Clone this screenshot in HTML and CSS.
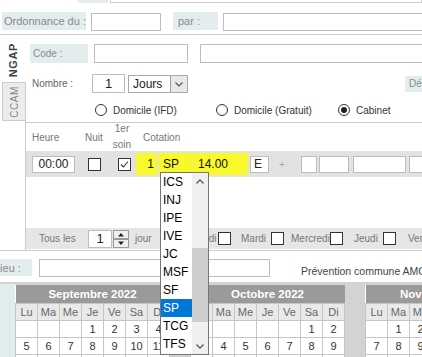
FILE: index.html
```html
<!DOCTYPE html>
<html lang="fr">
<head>
    <meta charset="UTF-8">
    <meta name="viewport" content="width=device-width, initial-scale=1.0">
    <title>Saisie des soins</title>
    <link rel="stylesheet" href="styles.css">
</head>
<body>
<div class="screen">
    <div class="top-strip"><span class="strip-label"></span><span class="strip-field"></span></div>

    <div class="ord-row">
        <label class="field-label ord-label">Ordonnance du :</label>
        <input class="field ord-date" type="text">
        <label class="field-label par-label">par :</label>
        <input class="field par-field" type="text">
    </div>

    <div class="acte-box">
        <div class="tabs">
            <div class="tab tab-active"><span>NGAP</span></div>
            <div class="tab tab-ccam"><span>CCAM</span></div>
        </div>
        <div class="panel">
            <div class="code-row">
                <label class="field-label code-label">Code :</label>
                <input class="field code-field" type="text">
                <input class="field libelle-field" type="text">
            </div>

            <div class="nombre-row">
                <span class="nombre-label">Nombre :</span>
                <input class="field nombre-field" type="text" value="1">
                <div class="select">
                    <span class="select-value">Jours</span>
                    <span class="select-arrow">
                        <svg width="16" height="16" viewBox="0 0 16 16"><path d="M4.5 6.5 L8 10 L11.5 6.5" fill="none" stroke="#555" stroke-width="1.2"/></svg>
                    </span>
                </div>
                <label class="field-label debut-label">Début :</label>
            </div>

            <div class="radio-row">
                <span class="radio-opt opt-ifd"><span class="radio"></span>Domicile (IFD)</span>
                <span class="radio-opt opt-gratuit"><span class="radio"></span>Domicile (Gratuit)</span>
                <span class="radio-opt"><span class="radio radio-on"></span>Cabinet</span>
            </div>

            <div class="cot-head">
                <span class="h-heure">Heure</span>
                <span class="h-nuit">Nuit</span>
                <span class="h-soin">1er<br>soin</span>
                <span class="h-cot">Cotation</span>
            </div>

            <div class="cot-band">
                <input class="field heure-field" type="text" value="00:00">
                <span class="check cb-nuit"></span>
                <span class="check cb-soin">
                    <svg width="11" height="11" viewBox="0 0 11 11"><path d="M2 5.5 L4.5 8 L9 2.5" fill="none" stroke="#333" stroke-width="1.1"/></svg>
                </span>
                <input class="field hl hl-coef" type="text" value="1">
                <input class="field hl hl-code" type="text" value="SP">
                <input class="field hl hl-montant" type="text" value="14.00">
                <input class="field e-field" type="text" value="E">
                <span class="plus">+</span>
                <input class="field x1" type="text">
                <input class="field x2" type="text">
                <input class="field x3" type="text">
                <input class="field x4" type="text">
            </div>

            <div class="tous-band">
                <span class="tous-label">Tous les</span>
                <input class="field tous-field" type="text" value="1">
                <span class="spinner">
                    <span class="spin-btn"><svg width="8" height="5" viewBox="0 0 8 5"><path d="M1 4.5 L4 1 L7 4.5 Z" fill="#222"/></svg></span>
                    <span class="spin-btn"><svg width="8" height="5" viewBox="0 0 8 5"><path d="M1 0.5 L4 4 L7 0.5 Z" fill="#222"/></svg></span>
                </span>
                <span class="jour-label">jour</span>
                <span class="day-label lundi">Lundi</span><span class="check"></span>
                <span class="day-label mardi">Mardi</span><span class="check"></span>
                <span class="day-label mercredi">Mercredi</span><span class="check"></span>
                <span class="day-label jeudi">Jeudi</span><span class="check"></span>
                <span class="day-label vendredi">Vendredi</span>
            </div>
        </div>
    </div>

    <div class="lieu-row">
        <label class="field-label lieu-label">Lieu :</label>
        <input class="field lieu-field" type="text">
        <span class="prevention">Prévention commune AMC</span>
    </div>

    <div class="calendars">
        <div class="cal-strip"></div>
        <div class="cal-group">
            <table class="cal">
                <tr><th class="cal-title" colspan="7">Septembre 2022</th></tr>
                <tr class="days"><td>Lu</td><td>Ma</td><td>Me</td><td>Je</td><td>Ve</td><td>Sa</td><td>Di</td></tr>
                <tr><td></td><td></td><td></td><td>1</td><td>2</td><td>3</td><td>4</td></tr>
                <tr><td>5</td><td>6</td><td>7</td><td>8</td><td>9</td><td>10</td><td>11</td></tr>
                <tr><td>12</td><td>13</td><td>14</td><td>15</td><td>16</td><td>17</td><td>18</td></tr>
            </table>
            <table class="cal">
                <tr><th class="cal-title" colspan="7">Octobre 2022</th></tr>
                <tr class="days"><td>Lu</td><td>Ma</td><td>Me</td><td>Je</td><td>Ve</td><td>Sa</td><td>Di</td></tr>
                <tr><td></td><td></td><td></td><td></td><td></td><td>1</td><td>2</td></tr>
                <tr><td>3</td><td>4</td><td>5</td><td>6</td><td>7</td><td>8</td><td>9</td></tr>
                <tr><td>10</td><td>11</td><td>12</td><td>13</td><td>14</td><td>15</td><td>16</td></tr>
            </table>
            <table class="cal">
                <tr><th class="cal-title" colspan="7">Novembre 2022</th></tr>
                <tr class="days"><td>Lu</td><td>Ma</td><td>Me</td><td>Je</td><td>Ve</td><td>Sa</td><td>Di</td></tr>
                <tr><td></td><td>1</td><td>2</td><td>3</td><td>4</td><td>5</td><td>6</td></tr>
                <tr><td>7</td><td>8</td><td>9</td><td>10</td><td>11</td><td>12</td><td>13</td></tr>
                <tr><td>14</td><td>15</td><td>16</td><td>17</td><td>18</td><td>19</td><td>20</td></tr>
            </table>
        </div>
    </div>

    <!-- liste ouverte du code de cotation -->
    <div class="code-list">
        <ul class="code-items">
            <li>ICS</li>
            <li>INJ</li>
            <li>IPE</li>
            <li>IVE</li>
            <li>JC</li>
            <li>MSF</li>
            <li>SF</li>
            <li class="selected">SP</li>
            <li>TCG</li>
            <li>TFS</li>
        </ul>
        <div class="scrollbar">
            <span class="scroll-btn"><svg width="16" height="16" viewBox="0 0 16 16"><path d="M4.5 9.5 L8 6 L11.5 9.5" fill="none" stroke="#606060" stroke-width="1.4"/></svg></span>
            <span class="scroll-thumb"></span>
            <span class="scroll-btn scroll-down"><svg width="16" height="16" viewBox="0 0 16 16"><path d="M4.5 6.5 L8 10 L11.5 6.5" fill="none" stroke="#606060" stroke-width="1.4"/></svg></span>
        </div>
    </div>
</div>
</body>
</html>
```

FILE: styles.css
```css
* {
    box-sizing: border-box;
}

html, body {
    margin: 0;
    overflow: hidden;
}

body {
    font-family: 'Liberation Sans', Arial, sans-serif;
    font-size: 10px;
    color: #666;
    background: #fff;
}

.screen {
    position: relative;
    width: 422px;
    height: 357px;
    overflow: hidden;
}

/* champs */
.field {
    margin: 0;
    padding: 0 3px;
    border: 1px solid #bdbdbd;
    background: #fff;
    font-family: 'Liberation Sans', Arial, sans-serif;
    font-size: 12px;
    color: #222;
    outline: none;
    flex: none;
}

.field-label {
    display: flex;
    align-items: center;
    background: #e3eded;
    color: #8a8a8a;
    flex: none;
}

.check {
    display: flex;
    align-items: center;
    justify-content: center;
    width: 13px;
    height: 13px;
    border: 1px solid #333;
    background: #fff;
    flex: none;
}

/* bande du haut */
.top-strip {
    display: flex;
    height: 3px;
}

.strip-label {
    margin-left: 78px;
    width: 30px;
    background: #e3eded;
}

.strip-field {
    margin-left: 2px;
    flex: 1;
    border: 1px solid #ccc;
    border-top: none;
}

.ord-row {
    display: flex;
    align-items: flex-start;
    margin-top: 9px;
    height: 19px;
}

.ord-label {
    margin-left: 2px;
    width: 84px;
    height: 18px;
    padding-left: 2px;
    font-size: 11px;
}

.ord-date {
    margin-left: 5px;
    margin-top: 1px;
    width: 70px;
    height: 18px;
}

.par-label {
    margin-left: 12px;
    width: 45px;
    height: 18px;
    padding-left: 5px;
    font-size: 11px;
}

.par-field {
    margin-left: 5px;
    margin-top: 1px;
    width: 210px;
    height: 18px;
}

/* onglets NGAP / CCAM */
.acte-box {
    display: flex;
    margin-top: 3px;
    height: 217px;
    border-top: 1px solid #ccc;
    border-bottom: 1px solid #ccc;
}

.tabs {
    position: relative;
    z-index: 1;
    width: 25px;
    flex: none;
}

.tab {
    display: flex;
    align-items: center;
    justify-content: center;
}

.tab span {
    writing-mode: vertical-rl;
    transform: rotate(180deg);
    letter-spacing: 0.6px;
}

.tab-active {
    width: 26px;
    height: 47px;
    background: #fff;
    padding-top: 3px;
}

.tab-active span {
    font-size: 11px;
    font-weight: bold;
    color: #444;
}

.tab-ccam {
    margin-left: 2px;
    width: 23px;
    height: 39px;
    background: #ececec;
    border: 1px solid #ccc;
    border-right: none;
}

.tab-ccam span {
    color: #888;
}

.panel {
    flex: 1;
    display: flex;
    flex-direction: column;
    border-left: 1px solid #ccc;
}

.code-row {
    display: flex;
    align-items: center;
    margin-top: 8px;
    height: 20px;
}

.code-label {
    margin-left: 4px;
    width: 58px;
    height: 19px;
    padding-left: 3px;
}

.code-field {
    margin-left: 6px;
    width: 94px;
    height: 19px;
}

.libelle-field {
    margin-left: 12px;
    width: 240px;
    height: 19px;
}

.nombre-row {
    display: flex;
    align-items: center;
    margin-top: 11px;
    height: 19px;
}

.nombre-label {
    margin-left: 6px;
    width: 60px;
    flex: none;
}

.nombre-field {
    width: 33px;
    height: 19px;
    text-align: center;
    font-size: 13px;
}

.select {
    display: flex;
    margin-left: 3px;
    width: 60px;
    height: 18px;
    border: 1px solid #aaa;
    background: #fff;
    flex: none;
}

.select-value {
    flex: 1;
    padding-left: 4px;
    font-size: 12px;
    line-height: 16px;
    color: #222;
}

.select-arrow {
    display: flex;
    align-items: center;
    justify-content: center;
    width: 17px;
    background: #e8e8e8;
    border-left: 1px solid #a0a0a0;
}

.debut-label {
    margin-left: 217px;
    width: 50px;
    height: 16px;
    padding-left: 4px;
}

.radio-row {
    display: flex;
    align-items: center;
    margin-top: 10px;
    height: 14px;
    color: #333;
}

.radio-opt {
    display: flex;
    align-items: center;
    gap: 6px;
    flex: none;
}

.opt-ifd {
    margin-left: 69px;
    width: 121px;
}

.opt-gratuit {
    width: 122px;
}

.radio {
    display: flex;
    align-items: center;
    justify-content: center;
    width: 12px;
    height: 12px;
    border: 1px solid #333;
    border-radius: 50%;
    background: #fff;
}

.radio-on::after {
    content: '';
    width: 6px;
    height: 6px;
    border-radius: 50%;
    background: #222;
}

.cot-head {
    display: flex;
    align-items: center;
    margin-top: 5px;
    height: 29px;
    border-top: 1px solid #ccc;
    color: #777;
}

.h-heure {
    margin-left: 6px;
    width: 53px;
}

.h-nuit {
    width: 27px;
}

.h-soin {
    width: 20px;
    line-height: 16px;
    text-align: center;
}

.h-cot {
    margin-left: 11px;
}

.cot-band {
    display: flex;
    align-items: center;
    height: 26px;
    background: #e2e2e2;
}

.cot-band .field {
    height: 17px;
}

.heure-field {
    margin-left: 6px;
    width: 43px;
    text-align: center;
}

.cb-nuit {
    margin-left: 13px;
}

.cb-soin {
    margin-left: 17px;
}

.cot-band .hl {
    height: 20px;
    border: none;
    background: #f8f82a;
    box-shadow: 0 0 2px 1px #f8f82a;
    color: #111;
}

.hl-coef {
    margin-left: 6px;
    width: 19px;
    padding: 0 2px 0 0;
    text-align: right;
}

.hl-code {
    margin-left: 4px;
    width: 31px;
}

.hl-montant {
    margin-left: 2px;
    width: 54px;
    padding-left: 5px;
}

.e-field {
    margin-left: 3px;
    width: 19px;
}

.plus {
    width: 26px;
    text-align: center;
    color: #aaa;
    font-size: 10px;
}

.x1 {
    margin-left: 6px;
    width: 16px;
}

.x2 {
    margin-left: 2px;
    width: 30px;
}

.x3 {
    margin-left: 4px;
    width: 53px;
}

.x4 {
    margin-left: 3px;
    width: 30px;
}

.tous-band {
    display: flex;
    align-items: center;
    margin-top: auto;
    margin-bottom: 1px;
    height: 21px;
    background: #e6e6e6;
    color: #777;
}

.tous-label {
    margin-left: 13px;
    width: 49px;
    flex: none;
}

.tous-field {
    width: 24px;
    height: 18px;
    text-align: center;
    font-size: 13px;
}

.spinner {
    display: flex;
    flex-direction: column;
    margin-left: 1px;
    width: 16px;
    height: 18px;
    flex: none;
}

.spin-btn {
    display: flex;
    align-items: center;
    justify-content: center;
    height: 9px;
    border: 1px solid #999;
    background: #f0f0f0;
}

.jour-label {
    margin-left: 6px;
    width: 57px;
    flex: none;
}

.day-label {
    flex: none;
    white-space: nowrap;
}

.lundi {
    width: 26px;
}

.mardi {
    margin-left: 10px;
    width: 30px;
}

.mercredi {
    margin-left: 7px;
    width: 39px;
}

.jeudi {
    margin-left: 11px;
    width: 29px;
}

.vendredi {
    margin-left: 12px;
}

/* lieu */
.lieu-row {
    display: flex;
    align-items: center;
    margin-top: 7px;
    height: 19px;
}

.lieu-label {
    margin-left: -7px;
    width: 39px;
    height: 17px;
    padding-left: 1px;
    font-size: 11px;
}

.lieu-field {
    margin-left: 7px;
    width: 231px;
    height: 18px;
}

.prevention {
    margin-left: 31px;
    color: #444;
    font-size: 10.5px;
    white-space: nowrap;
    padding-top: 7px;
}

/* calendriers */
.calendars {
    display: flex;
    margin-top: 5px;
    height: 80px;
    border-top: 2px solid #d3d3d3;
}

.cal-strip {
    width: 15px;
    flex: none;
    background: #e1ecec;
}

.cal-group {
    display: flex;
    gap: 20px;
    flex: 1;
    padding-top: 1px;
    background: #d3d3d3;
}

.cal {
    flex: none;
    width: 155px;
    border-collapse: collapse;
    table-layout: fixed;
    background: #fff;
    align-self: flex-start;
}

.cal-title {
    height: 18px;
    padding: 0;
    background: #9a9a9a;
    color: #fff;
    font-size: 11.5px;
    font-weight: bold;
}

.cal td {
    height: 17px;
    padding: 0;
    border: 1px solid #c6c6c6;
    text-align: center;
    font-size: 11px;
    color: #333;
}

.cal .days td {
    background: #e9e9e9;
    color: #666;
}

/* liste deroulante */
.code-list {
    position: absolute;
    left: 160px;
    top: 172px;
    z-index: 5;
    display: flex;
    width: 49px;
    height: 183px;
    border: 1px solid #767676;
    background: #fff;
}

.code-items {
    margin: 0;
    padding: 0;
    list-style: none;
    width: 31px;
}

.code-items li {
    height: 18px;
    line-height: 18px;
    padding-left: 2px;
    font-size: 12px;
    color: #000;
}

.code-items li.selected {
    background: #0078d7;
    color: #fff;
}

.scrollbar {
    display: flex;
    flex-direction: column;
    width: 16px;
    background: #f0f0f0;
}

.scroll-btn {
    display: flex;
    align-items: center;
    justify-content: center;
    height: 17px;
    flex: none;
}

.scroll-thumb {
    margin-top: 58px;
    height: 74px;
    background: #cdcdcd;
    flex: none;
}

.scroll-down {
    margin-top: auto;
}
```
